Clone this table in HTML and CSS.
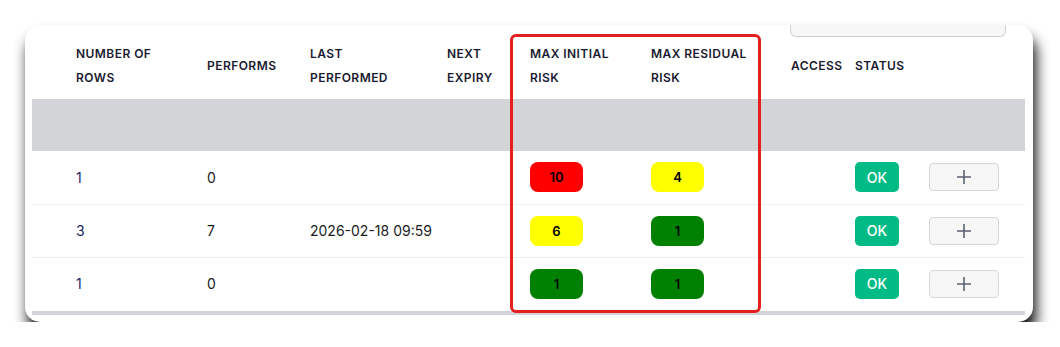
FILE: index.html
```html
<!DOCTYPE html>
<html>
<head>
<meta charset="utf-8">
<link rel="stylesheet" href="styles.css">
</head>
<body>
<div class="card">
  <div class="toolbar"><div class="search"></div></div>
  <table class="grid">
    <colgroup>
      <col class="c0"><col class="c1"><col class="c2"><col class="c3"><col class="c4"><col class="c5"><col class="c6"><col class="c7"><col class="c8"><col class="c9">
    </colgroup>
    <thead>
      <tr class="head">
        <th></th>
        <th>NUMBER OF<br>ROWS</th>
        <th>PERFORMS</th>
        <th>LAST<br>PERFORMED</th>
        <th>NEXT<br>EXPIRY</th>
        <th>MAX INITIAL<br>RISK</th>
        <th>MAX RESIDUAL<br>RISK</th>
        <th>ACCESS</th>
        <th>STATUS</th>
        <th></th>
      </tr>
      <tr class="filter"><th colspan="10"></th></tr>
    </thead>
    <tbody>
      <tr>
        <td></td><td class="num">1</td><td>0</td><td></td><td></td>
        <td><span class="risk red">10</span></td>
        <td><span class="risk yellow">4</span></td>
        <td></td>
        <td><span class="ok">OK</span></td>
        <td><button class="add"><svg width="16" height="16" viewBox="0 0 16 16"><path d="M8 1v14M1 8h14" stroke="#5b6172" stroke-width="1.6" fill="none"/></svg></button></td>
      </tr>
      <tr>
        <td></td><td class="num">3</td><td>7</td><td>2026-02-18 09:59</td><td></td>
        <td><span class="risk yellow">6</span></td>
        <td><span class="risk green">1</span></td>
        <td></td>
        <td><span class="ok">OK</span></td>
        <td><button class="add"><svg width="16" height="16" viewBox="0 0 16 16"><path d="M8 1v14M1 8h14" stroke="#5b6172" stroke-width="1.6" fill="none"/></svg></button></td>
      </tr>
      <tr>
        <td></td><td class="num">1</td><td>0</td><td></td><td></td>
        <td><span class="risk green">1</span></td>
        <td><span class="risk green">1</span></td>
        <td></td>
        <td><span class="ok">OK</span></td>
        <td><button class="add"><svg width="16" height="16" viewBox="0 0 16 16"><path d="M8 1v14M1 8h14" stroke="#5b6172" stroke-width="1.6" fill="none"/></svg></button></td>
      </tr>
    </tbody>
  </table>
  <div class="scrollbar"></div>
  <div class="highlight"></div>
</div>
</body>
</html>
```

FILE: styles.css
```css
* { box-sizing: border-box; }
html, body { margin: 0; padding: 0; background: #fff; }
body { font-family: Inter, "Noto Sans", sans-serif; color: #1c1c2e; }

.card {
  position: relative;
  margin: 25px 0 0 25px;
  width: 1008px;
  height: 297px;
  background: #fff;
  border-radius: 15px;
  box-shadow: 3px 12px 14px rgba(0, 0, 0, 0.95);
  padding: 0 8px 0 7px;
}

.toolbar { display: flex; justify-content: flex-end; height: 12px; padding-right: 19px; }
.search {
  width: 216px;
  height: 12px;
  background: #f7f7f8;
  border: 1px solid #cfd0d4;
  border-top: none;
  border-radius: 0 0 6px 6px;
}

.grid { width: 993px; border-collapse: collapse; table-layout: fixed; }
.c0 { width: 44px; } .c1 { width: 131px; } .c2 { width: 103px; } .c3 { width: 137px; }
.c4 { width: 83px; } .c5 { width: 121px; } .c6 { width: 140px; } .c7 { width: 64px; }
.c8 { width: 74px; } .c9 { width: 96px; }

.head th {
  height: 62px;
  padding: 5px 0 9px;
  text-align: left;
  font-size: 12px;
  font-weight: 600;
  line-height: 24px;
  letter-spacing: 0.45px;
  color: #1a1a30;
  vertical-align: middle;
  white-space: nowrap;
}
.filter th { height: 52px; background: #d3d4d8; padding: 0; }

tbody td {
  height: 53px;
  padding: 0;
  font-size: 14px;
  color: #1c1c24;
  border-bottom: 1px solid #eeeff1;
  vertical-align: middle;
  white-space: nowrap;
}
tbody tr:last-child td { border-bottom: none; }
tbody td.num { color: #1c2468; }

.risk {
  display: inline-flex;
  align-items: center;
  justify-content: center;
  width: 53px;
  height: 30px;
  border-radius: 8px;
  font-size: 13px;
  font-weight: 600;
  color: #000;
}
.red { background: #ff0000; }
.yellow { background: #ffff00; }
.green { background: #008000; }

.ok {
  display: inline-flex;
  align-items: center;
  justify-content: center;
  width: 44px;
  height: 30px;
  border-radius: 5px;
  background: #00bb85;
  color: #fff;
  font-size: 14px;
  font-weight: 500;
}

.add {
  display: inline-flex;
  align-items: center;
  justify-content: center;
  width: 70px;
  height: 28px;
  background: #f6f6f7;
  border: 1px solid #d6d7db;
  border-radius: 4px;
  padding: 0;
}

.scrollbar { height: 4px; margin-top: 1px; background: #d3d4d8; width: 993px; }

.highlight {
  position: absolute;
  left: 485px;
  top: 9px;
  width: 251px;
  height: 279px;
  border: 3px solid #e3201f;
  border-radius: 6px;
  pointer-events: none;
}
```
